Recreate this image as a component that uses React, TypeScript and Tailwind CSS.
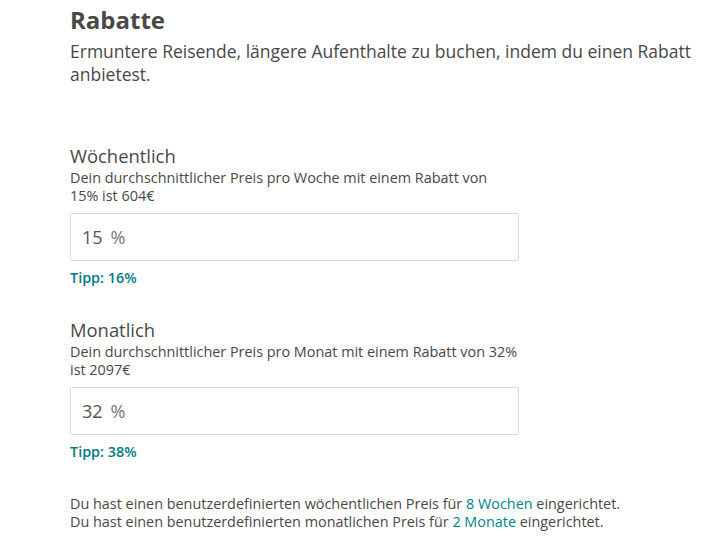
export default function App() {
  const font = { fontFamily: '"Open Sans", "Liberation Sans", sans-serif' };

  const sections = [
    {
      title: 'Wöchentlich',
      desc: ['Dein durchschnittlicher Preis pro Woche mit einem Rabatt von', '15% ist 604€'],
      value: '15',
      tip: 'Tipp: 16%',
    },
    {
      title: 'Monatlich',
      desc: ['Dein durchschnittlicher Preis pro Monat mit einem Rabatt von 32%', 'ist 2097€'],
      value: '32',
      tip: 'Tipp: 38%',
    },
  ];

  return (
    <div className="min-h-screen bg-white pl-[70px] pr-[20px] pt-[4px] text-[#484848]" style={font}>
      <h1 className="text-[24px] font-bold leading-[32px] text-[#484848]">Rabatte</h1>
      <p className="mt-[4px] text-[17.5px] leading-[23px] text-[#484848]">
        Ermuntere Reisende, längere Aufenthalte zu buchen, indem du einen Rabatt
        <br />
        anbietest.
      </p>

      <div className="mt-[58px] flex flex-col gap-[31px]">
        {sections.map((s) => (
          <div key={s.title} className="w-[449px]">
            <h2 className="text-[18.4px] leading-[24px] font-normal">{s.title}</h2>
            <p className="mt-[1px] text-[14.4px] leading-[18px]">
              {s.desc[0]}
              <br />
              {s.desc[1]}
            </p>
            <div className="mt-[8px] flex h-[48px] items-center rounded-[2px] border border-[#dbdbdb] px-[11px] text-[18px] text-[#555555]">
              <span>{s.value}</span>
              <span className="ml-[8px] text-[#767676]">%</span>
            </div>
            <div className="mt-[8px] text-[14.4px] leading-[18px] font-semibold text-[#007a87]">{s.tip}</div>
          </div>
        ))}
      </div>

      <div className="mt-[34px] text-[14.4px] leading-[18px]">
        <p>
          Du hast einen benutzerdefinierten wöchentlichen Preis für{' '}
          <span className="text-[#008489]">8 Wochen</span> eingerichtet.
        </p>
        <p>
          Du hast einen benutzerdefinierten monatlichen Preis für{' '}
          <span className="text-[#008489]">2 Monate</span> eingerichtet.
        </p>
      </div>
    </div>
  );
}
